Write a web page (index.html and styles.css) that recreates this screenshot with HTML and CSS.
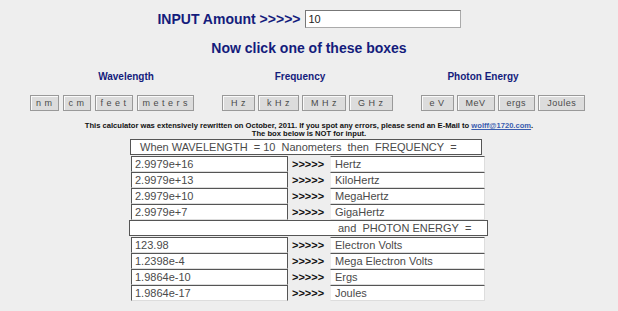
FILE: index.html
```
<!DOCTYPE html>
<html lang="en">
<head>
    <meta charset="UTF-8">
    <meta name="viewport" content="width=device-width, initial-scale=1.0">
    <title>Wavelength Calculator</title>
<link rel="stylesheet" href="styles.css">
</head>
<body>
    <div id="wrapper">
        <div class="amount">
            <span class="label">INPUT Amount &gt;&gt;&gt;&gt;&gt;</span>
            <div class="amount-box">10</div>
        </div>
        <div class="hint">Now click one of these boxes</div>

        <div class="heads">
            <div class="head h1">Wavelength</div>
            <div class="head h2">Frequency</div>
            <div class="head h3">Photon Energy</div>
        </div>
        <div class="units">
            <div class="group">
                <span class="btn">n m</span>
                <span class="btn">c m</span>
                <span class="btn">f e e t</span>
                <span class="btn">m e t e r s</span>
            </div>
            <div class="group wide">
                <span class="btn">H z</span>
                <span class="btn">k H z</span>
                <span class="btn">M H z</span>
                <span class="btn">G H z</span>
            </div>
            <div class="group wide">
                <span class="btn">e V</span>
                <span class="btn">MeV</span>
                <span class="btn">ergs</span>
                <span class="btn">Joules</span>
            </div>
        </div>

        <div class="note">
            This calculator was extensively rewritten on October, 2011. If you spot any errors, please send an E-Mail to <a href="#">wolff@1720.com</a>.<br>
            The box below is NOT for input.
        </div>

        <div class="result">
            <div class="field title">When WAVELENGTH&nbsp; = 10&nbsp; Nanometers&nbsp; then&nbsp; FREQUENCY&nbsp; =</div>
            <div class="row"><div class="field val">2.9979e+16</div><div class="arrow">&gt;&gt;&gt;&gt;&gt;</div><div class="field name">Hertz</div></div>
            <div class="row"><div class="field val">2.9979e+13</div><div class="arrow">&gt;&gt;&gt;&gt;&gt;</div><div class="field name">KiloHertz</div></div>
            <div class="row"><div class="field val">2.9979e+10</div><div class="arrow">&gt;&gt;&gt;&gt;&gt;</div><div class="field name">MegaHertz</div></div>
            <div class="row"><div class="field val">2.9979e+7</div><div class="arrow">&gt;&gt;&gt;&gt;&gt;</div><div class="field name">GigaHertz</div></div>
            <div class="field photon">and&nbsp; PHOTON ENERGY&nbsp; =</div>
            <div class="row"><div class="field val">123.98</div><div class="arrow">&gt;&gt;&gt;&gt;&gt;</div><div class="field name">Electron Volts</div></div>
            <div class="row"><div class="field val">1.2398e-4</div><div class="arrow">&gt;&gt;&gt;&gt;&gt;</div><div class="field name">Mega Electron Volts</div></div>
            <div class="row"><div class="field val">1.9864e-10</div><div class="arrow">&gt;&gt;&gt;&gt;&gt;</div><div class="field name">Ergs</div></div>
            <div class="row"><div class="field val">1.9864e-17</div><div class="arrow">&gt;&gt;&gt;&gt;&gt;</div><div class="field name">Joules</div></div>
        </div>
    </div>
</body>
</html>
```
FILE: styles.css
```
body{
    margin: 0;
    background-color: #eeeeee;
    font-family: "Liberation Sans", Arial, sans-serif;
}
#wrapper{
    width: 618px;
}
.amount{
    display: flex;
    justify-content: center;
    align-items: center;
    margin-top: 10px;
}
.label{
    font-size: 14px;
    font-weight: bold;
    color: #141c7c;
}
.amount-box{
    width: 156px;
    height: 18px;
    box-sizing: border-box;
    margin-left: 4px;
    background-color: white;
    border: 1px solid #aaa;
    border-top-color: #777;
    border-left-color: #777;
    font-size: 11px;
    line-height: 16px;
    padding-left: 3px;
    color: #222;
}
.hint{
    margin-top: 12px;
    text-align: center;
    font-size: 14px;
    line-height: 16px;
    font-weight: bold;
    color: #141c7c;
}
.heads{
    display: flex;
    margin-top: 13px;
    padding-left: 30px;
}
.head{
    text-align: center;
    font-size: 10px;
    line-height: 16px;
    font-weight: bold;
    color: #141c7c;
}
.h1{ width: 192px; }
.h2{ width: 156px; }
.h3{ width: 210px; }
.units{
    display: flex;
    gap: 28px;
    margin-top: 10px;
    padding-left: 30px;
}
.group{
    display: flex;
    gap: 4px;
}
.btn{
    height: 16px;
    box-sizing: border-box;
    padding: 0 5px;
    background-color: #dcdcdc;
    border: 1px solid #999;
    box-shadow: inset 1px 1px 0 #fafafa;
    font-size: 9px;
    line-height: 14px;
    letter-spacing: 0.5px;
    color: #4a4a4a;
    white-space: pre;
}
.wide{
    gap: 3px;
}
.wide .btn{
    padding: 0 8px;
}
.note{
    margin-top: 11px;
    text-align: center;
    font-size: 7.6px;
    line-height: 8px;
    font-weight: bold;
    color: #111;
}
.note a{
    color: #3a5db0;
}
.result{
    width: 360px;
    margin: 1px auto 0;
}
.field{
    height: 16px;
    box-sizing: border-box;
    background-color: white;
    border: 1px solid #555;
    border-right-color: #ddd;
    border-bottom-color: #ddd;
    font-size: 11px;
    line-height: 14px;
    color: #4a4a4a;
    white-space: nowrap;
    overflow: hidden;
}
.title{
    width: 352px;
    margin-left: 1px;
    margin-bottom: 1px;
    padding-left: 9px;
    border-right-color: #555;
    border-bottom-color: #555;
}
.photon{
    width: 359px;
    margin-bottom: 1px;
    padding-left: 208px;
    border-right-color: #555;
    border-bottom-color: #555;
}
.row{
    display: flex;
    margin-left: 2px;
}
.val{
    width: 157px;
    padding-left: 3px;
    border-right-color: #555;
}
.arrow{
    width: 42px;
    padding-left: 4px;
    box-sizing: border-box;
    font-size: 11px;
    line-height: 16px;
    font-weight: bold;
    color: #111;
}
.name{
    width: 155px;
    padding-left: 4px;
    border-left-color: #eee;
}
```
